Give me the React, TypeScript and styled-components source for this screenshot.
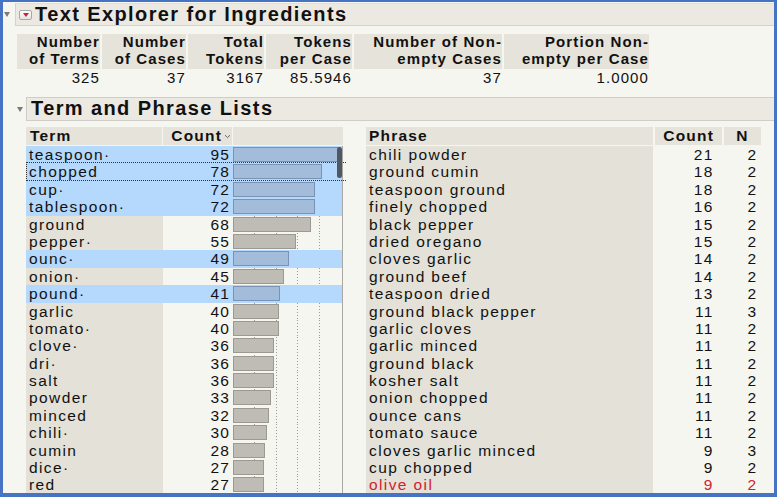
import React from 'react';
import styled, { createGlobalStyle } from 'styled-components';

const GlobalStyle = createGlobalStyle`
  html, body {
    margin: 0;
    padding: 0;
    background: #f6f6f1;
  }
`;

const Frame = styled.div`
  width: 777px;
  height: 497px;
  box-sizing: border-box;
  border-style: solid;
  border-color: #4773c4;
  border-width: 2px 3px 4px 3px;
  background: #f6f6f1;
  overflow: hidden;
  color: #111;
  font-family: 'Liberation Sans', Arial, sans-serif;
`;

const Disclosure = styled.span<{ $left: number }>`
  width: 0;
  height: 0;
  margin-left: ${(p) => p.$left}px;
  border-left: 3.5px solid transparent;
  border-right: 3.5px solid transparent;
  border-top: 5px solid #7b7b7b;
  flex: none;
`;

const TitleRow = styled.div`
  display: flex;
  align-items: center;
  margin-top: 1px;
`;

const TitleBar = styled.div`
  flex: 1;
  height: 23px;
  box-sizing: border-box;
  margin-left: 5px;
  display: flex;
  align-items: center;
  background: #ebe9e2;
  border: 1px solid #d4d2ca;
  border-top-color: #e2e0d8;
  border-right: none;
`;

const MenuButton = styled.span`
  width: 13px;
  height: 10px;
  box-sizing: border-box;
  margin-left: 3px;
  border: 1px solid #a8a8a8;
  border-radius: 2px;
  background: linear-gradient(#fdfdfd, #e4e4e4);
  display: flex;
  align-items: center;
  justify-content: center;
  flex: none;

  &::before {
    content: '';
    border-left: 3.5px solid transparent;
    border-right: 3.5px solid transparent;
    border-top: 4px solid #d1212c;
  }
`;

const Heading = styled.span<{ $gap?: number }>`
  font-weight: bold;
  font-size: 20px;
  letter-spacing: 1.4px;
  line-height: 21px;
  margin-left: ${(p) => p.$gap ?? 0}px;
  white-space: nowrap;
`;

const Summary = styled.div`
  display: grid;
  grid-template-columns: 83px 84px 76px 86px 148px 145px;
  grid-template-rows: 35px 17px;
  column-gap: 2px;
  row-gap: 1px;
  margin: 8px 0 0 14px;
`;

const SumHead = styled.div`
  background: #e5e3da;
  font-weight: bold;
  font-size: 15px;
  letter-spacing: 1.1px;
  line-height: 16.5px;
  text-align: right;
  white-space: nowrap;
`;

const SumValue = styled.div`
  font-size: 15px;
  letter-spacing: 1.1px;
  line-height: 15px;
  text-align: right;
`;

const SectionRow = styled.div`
  display: flex;
  align-items: center;
  margin-top: 10px;
`;

const SectionBar = styled.div`
  flex: 1;
  height: 24px;
  box-sizing: border-box;
  margin-left: 3px;
  padding: 0 0 2px 4px;
  background: #ebe9e2;
  border: 1px solid #cfcdc5;
  border-right: none;
  display: flex;
  align-items: center;
`;

const Lists = styled.div`
  display: flex;
  align-items: flex-start;
  margin: 6px 0 0 23px;
`;

const TermTable = styled.div`
  position: relative;
  width: 317px;
  flex: none;
`;

const TermGrid = styled.div<{ $selected?: boolean; $focused?: boolean }>`
  position: relative;
  display: grid;
  grid-template-columns: 137px 70px 110px;
  height: 17.4px;
  background: ${(p) => (p.$selected ? '#b5d8fd' : 'transparent')};

  ${(p) =>
    p.$focused &&
    `
    &::after {
      content: '';
      position: absolute;
      left: 0;
      right: -3px;
      top: -1px;
      bottom: 0;
      border: 1px dotted #333;
      border-right: none;
      pointer-events: none;
    }
  `}
`;

const HeadGrid = styled(TermGrid)`
  height: 18px;
  margin-bottom: 1px;
`;

const HeadCell = styled.div<{ $align?: 'left' | 'right' | 'center'; $pad?: number; $gapRight?: boolean }>`
  background: #e5e3da;
  font-weight: bold;
  font-size: 15.5px;
  letter-spacing: 1.2px;
  line-height: 18px;
  display: flex;
  align-items: center;
  justify-content: ${(p) =>
    p.$align === 'right' ? 'flex-end' : p.$align === 'center' ? 'center' : 'flex-start'};
  padding: ${(p) => (p.$align === 'right' ? `0 ${p.$pad ?? 0}px 0 0` : `0 0 0 ${p.$pad ?? 0}px`)};
  border-right: ${(p) => (p.$gapRight ? '1px solid #f6f6f1' : 'none')};
  white-space: nowrap;
  overflow: hidden;
`;

const TextCell = styled.div<{ $shade?: boolean; $red?: boolean }>`
  background: ${(p) => (p.$shade ? '#e3e1d8' : 'transparent')};
  color: ${(p) => (p.$red ? '#d3202e' : '#111')};
  font-size: 15.5px;
  letter-spacing: 1.4px;
  line-height: 17.4px;
  padding-left: 3px;
  white-space: nowrap;
  overflow: hidden;
`;

const NumCell = styled.div<{ $pad: number; $red?: boolean }>`
  color: ${(p) => (p.$red ? '#d3202e' : '#111')};
  font-size: 15.5px;
  letter-spacing: 1.2px;
  line-height: 17.4px;
  text-align: right;
  padding-right: ${(p) => p.$pad}px;
  white-space: nowrap;
`;

const dot = 'linear-gradient(#9b9b96 50%, transparent 50%)';

const BarCell = styled.div<{ $grid: boolean }>`
  border-right: 1px solid #a9a8a2;
  padding-top: 1px;
  box-sizing: border-box;
  background-image: ${(p) => (p.$grid ? `${dot}, ${dot}, ${dot}, ${dot}` : 'none')};
  background-size: 1px 3px;
  background-repeat: repeat-y;
  background-position: 21px 0, 43px 0, 64px 0, 86px 0;
`;

const Bar = styled.div<{ $selected: boolean }>`
  height: 15px;
  box-sizing: border-box;
  background: ${(p) => (p.$selected ? '#a3bcda' : '#bebcb5')};
  border: 1px solid ${(p) => (p.$selected ? '#7a92b3' : '#9b9992')};
`;

const ScrollThumb = styled.div`
  position: absolute;
  left: 311px;
  top: 20px;
  width: 5px;
  height: 31px;
  border-radius: 3px;
  background: #4f5761;
`;

const SortMark = styled.svg`
  margin-left: 2px;
  flex: none;
`;

const PhraseTable = styled.div`
  margin-left: 23px;
  width: 395px;
  flex: none;
`;

const PhraseGrid = styled.div`
  display: grid;
  grid-template-columns: 287px 67px 37px;
  column-gap: 2px;
  height: 17.4px;
`;

const PhraseHead = styled(PhraseGrid)`
  height: 18px;
  margin-bottom: 1px;
`;

const terms: [string, number][] = [
  ['teaspoon·', 95],
  ['chopped', 78],
  ['cup·', 72],
  ['tablespoon·', 72],
  ['ground', 68],
  ['pepper·', 55],
  ['ounc·', 49],
  ['onion·', 45],
  ['pound·', 41],
  ['garlic', 40],
  ['tomato·', 40],
  ['clove·', 36],
  ['dri·', 36],
  ['salt', 36],
  ['powder', 33],
  ['minced', 32],
  ['chili·', 30],
  ['cumin', 28],
  ['dice·', 27],
  ['red', 27],
];

const selected = new Set([0, 1, 2, 3, 6, 8]);

const phrases: [string, number, number][] = [
  ['chili powder', 21, 2],
  ['ground cumin', 18, 2],
  ['teaspoon ground', 18, 2],
  ['finely chopped', 16, 2],
  ['black pepper', 15, 2],
  ['dried oregano', 15, 2],
  ['cloves garlic', 14, 2],
  ['ground beef', 14, 2],
  ['teaspoon dried', 13, 2],
  ['ground black pepper', 11, 3],
  ['garlic cloves', 11, 2],
  ['garlic minced', 11, 2],
  ['ground black', 11, 2],
  ['kosher salt', 11, 2],
  ['onion chopped', 11, 2],
  ['ounce cans', 11, 2],
  ['tomato sauce', 11, 2],
  ['cloves garlic minced', 9, 3],
  ['cup chopped', 9, 2],
  ['olive oil', 9, 2],
];

export default function App() {
  return (
    <>
      <GlobalStyle />
      <Frame>
        <TitleRow>
          <Disclosure $left={1} />
          <TitleBar>
            <MenuButton />
            <Heading $gap={3}>Text Explorer for Ingredients</Heading>
          </TitleBar>
        </TitleRow>

        <Summary>
          <SumHead>Number<br />of Terms</SumHead>
          <SumHead>Number<br />of Cases</SumHead>
          <SumHead>Total<br />Tokens</SumHead>
          <SumHead>Tokens<br />per Case</SumHead>
          <SumHead>Number of Non-<br />empty Cases</SumHead>
          <SumHead>Portion Non-<br />empty per Case</SumHead>
          <SumValue>325</SumValue>
          <SumValue>37</SumValue>
          <SumValue>3167</SumValue>
          <SumValue>85.5946</SumValue>
          <SumValue>37</SumValue>
          <SumValue>1.0000</SumValue>
        </Summary>

        <SectionRow>
          <Disclosure $left={14} />
          <SectionBar>
            <Heading>Term and Phrase Lists</Heading>
          </SectionBar>
        </SectionRow>

        <Lists>
          <TermTable>
            <HeadGrid>
              <HeadCell $pad={4} $gapRight>Term</HeadCell>
              <HeadCell $align="right" $pad={1} $gapRight>
                Count
                <SortMark width="7" height="5" viewBox="0 0 7 5">
                  <path d="M1 1.2 L3.5 3.6 L6 1.2" fill="none" stroke="#666" strokeWidth="1" />
                </SortMark>
              </HeadCell>
              <HeadCell />
            </HeadGrid>
            {terms.map(([t, c], i) => {
              const sel = selected.has(i);
              return (
                <TermGrid key={t} $selected={sel} $focused={i === 1}>
                  <TextCell $shade={!sel}>{t}</TextCell>
                  <NumCell $pad={2.8}>{c}</NumCell>
                  <BarCell $grid={!sel}>
                    <Bar $selected={sel} style={{ width: `${Math.round(c * 1.14)}px` }} />
                  </BarCell>
                </TermGrid>
              );
            })}
            <ScrollThumb />
          </TermTable>

          <PhraseTable>
            <PhraseHead>
              <HeadCell $pad={3}>Phrase</HeadCell>
              <HeadCell $align="right" $pad={8}>Count</HeadCell>
              <HeadCell $align="center">N</HeadCell>
            </PhraseHead>
            {phrases.map(([p, c, n], i) => {
              const red = i === phrases.length - 1;
              return (
                <PhraseGrid key={p}>
                  <TextCell $shade $red={red}>{p}</TextCell>
                  <NumCell $pad={8.5} $red={red}>{c}</NumCell>
                  <NumCell $pad={3.8} $red={red}>{n}</NumCell>
                </PhraseGrid>
              );
            })}
          </PhraseTable>
        </Lists>
      </Frame>
    </>
  );
}
